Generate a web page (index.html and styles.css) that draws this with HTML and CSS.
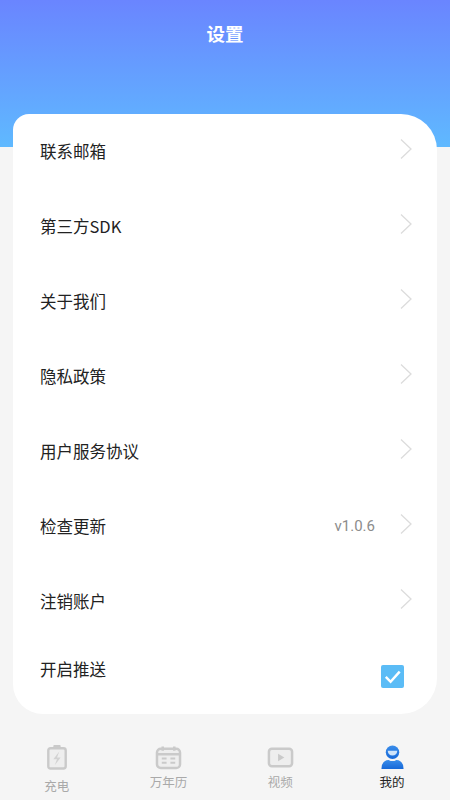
FILE: index.html
```html
<!DOCTYPE html>
<html>
<head>
    <title>设置</title>
    <link rel="stylesheet" href="styles.css">
</head>
<body>
    <div class="header">
        <h1>设置</h1>
    </div>
    <div class="card">
        <div class="row"><span class="label">联系邮箱</span><svg class="arrow" viewBox="0 0 14 22"><path d="M2 1.5 L12 11 L2 20.5"/></svg></div>
        <div class="row"><span class="label">第三方SDK</span><svg class="arrow" viewBox="0 0 14 22"><path d="M2 1.5 L12 11 L2 20.5"/></svg></div>
        <div class="row"><span class="label">关于我们</span><svg class="arrow" viewBox="0 0 14 22"><path d="M2 1.5 L12 11 L2 20.5"/></svg></div>
        <div class="row"><span class="label">隐私政策</span><svg class="arrow" viewBox="0 0 14 22"><path d="M2 1.5 L12 11 L2 20.5"/></svg></div>
        <div class="row"><span class="label">用户服务协议</span><svg class="arrow" viewBox="0 0 14 22"><path d="M2 1.5 L12 11 L2 20.5"/></svg></div>
        <div class="row"><span class="label">检查更新</span><span class="version">v1.0.6</span><svg class="arrow" viewBox="0 0 14 22"><path d="M2 1.5 L12 11 L2 20.5"/></svg></div>
        <div class="row"><span class="label">注销账户</span><svg class="arrow" viewBox="0 0 14 22"><path d="M2 1.5 L12 11 L2 20.5"/></svg></div>
        <div class="row push">
            <span class="label">开启推送</span>
            <div class="check"><svg viewBox="0 0 24 24"><path d="M5 12.5 L10 17.5 L19.5 7"/></svg></div>
        </div>
    </div>
    <div class="tabs">
        <div class="tab tab-low">
            <svg class="icon" viewBox="0 0 24 28">
                <path class="tint line" d="M5 4.5 H19 Q21.5 4.5 21.5 7 V24 Q21.5 26.5 19 26.5 H5 Q2.5 26.5 2.5 24 V7 Q2.5 4.5 5 4.5 Z"/>
                <rect class="fill" x="8" y="1" width="8" height="3.5" rx="1"/>
                <path class="bolt" d="M14.5 8 L8 16.5 H12 L9.5 23 L16 14.5 H12 Z"/>
            </svg>
            <span>充电</span>
        </div>
        <div class="tab">
            <svg class="icon wide" viewBox="0 0 28 26">
                <rect class="tint line" x="2" y="4" width="24" height="20" rx="4"/>
                <path class="line" d="M8 1.5 V6 M20 1.5 V6 M2 9.5 H26"/>
                <path class="line-thin" d="M7 14 H12 M16 14 H21 M7 18.5 H12 M16 18.5 H21"/>
            </svg>
            <span>万年历</span>
        </div>
        <div class="tab">
            <svg class="icon wide" viewBox="0 0 28 24">
                <rect class="tint line" x="2" y="3" width="24" height="18" rx="3"/>
                <path class="fill" d="M11.5 8 L18 12 L11.5 16 Z"/>
            </svg>
            <span>视频</span>
        </div>
        <div class="tab active">
            <svg class="icon wide" viewBox="0 0 26 26">
                <defs>
                    <linearGradient id="me" x1="0" y1="0" x2="0" y2="1">
                        <stop offset="0" stop-color="#3a8dea"/>
                        <stop offset="1" stop-color="#1668d8"/>
                    </linearGradient>
                </defs>
                <circle cx="13" cy="7.5" r="7" fill="url(#me)"/>
                <path d="M8 6 H18 Q17.5 11 13 11 Q8.5 11 8 6 Z" fill="#cfe4fa"/>
                <path d="M1.5 25 Q1.5 16 9 15.5 Q13 18 17 15.5 Q24.5 16 24.5 25 Z" fill="url(#me)"/>
            </svg>
            <span>我的</span>
        </div>
    </div>
</body>
</html>
```

FILE: styles.css
```css
html, body {
    margin: 0;
    padding: 0;
}
body {
    width: 450px;
    height: 800px;
    overflow: hidden;
    background: #f5f5f5;
    font-family: "Noto Sans CJK SC", "Noto Sans", sans-serif;
    display: flex;
    flex-direction: column;
}
.header {
    height: 147px;
    background: linear-gradient(180deg, #6a85ff 0%, #5fb9ff 100%);
    flex-shrink: 0;
}
h1 {
    margin: 0;
    padding-top: 20px;
    text-align: center;
    font-size: 18.5px;
    line-height: 26px;
    font-weight: 700;
    color: #fff;
}
.card {
    margin: -33px 13px 0 13px;
    height: 600px;
    background: #fff;
    border-radius: 16px 36px 36px 30px;
    flex-shrink: 0;
    display: flex;
    flex-direction: column;
}
.row {
    box-sizing: border-box;
    height: 75px;
    flex-shrink: 0;
    display: flex;
    align-items: center;
    padding: 0 24px 1px 27px;
}
.label {
    flex: 1;
    font-size: 16.5px;
    color: #222;
}
.version {
    font-family: "Roboto", sans-serif;
    font-size: 15px;
    color: #8c8c8c;
    margin-right: 24px;
}
.arrow {
    width: 14px;
    height: 22px;
    margin-bottom: 5px;
    fill: none;
    stroke: #dcdcdc;
    stroke-width: 1.3;
}
.push {
    padding-bottom: 15px;
}
.check {
    width: 23px;
    height: 23px;
    margin: 14px 9px 0 0;
    background: #5bbcf6;
    border-radius: 2px;
}
.check svg {
    display: block;
    width: 23px;
    height: 23px;
    fill: none;
    stroke: #fff;
    stroke-width: 2.6;
}
.tabs {
    flex: 1;
    display: flex;
    padding: 0 2px;
}
.tab {
    flex: 1;
    display: flex;
    flex-direction: column;
    align-items: center;
    padding-top: 31px;
    font-size: 12.5px;
    line-height: 16px;
    color: #a9a9a9;
}
.tab span {
    margin-top: 4px;
}
.tab-low {
    padding-top: 30px;
    margin-left: -1px;
}
.tab-low span {
    margin-top: 8px;
}
.active {
    color: #222;
}
.icon {
    width: 22px;
    height: 26px;
}
.icon.wide {
    width: 27px;
    height: 25px;
}
.line {
    fill: none;
    stroke: #cacaca;
    stroke-width: 2.6;
}
.tint {
    fill: #eeeeee;
}
.line-thin {
    fill: none;
    stroke: #cacaca;
    stroke-width: 2;
}
.fill {
    fill: #cacaca;
}
.bolt {
    fill: #d2d2d2;
}
```
